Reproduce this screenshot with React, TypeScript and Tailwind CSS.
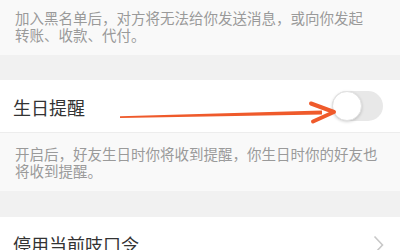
export default function App() {
  const font = { fontFamily: '"Noto Sans CJK SC", "Noto Sans", sans-serif' };
  return (
    <div
      className="relative h-[250px] w-[400px] overflow-hidden bg-[#f9f9f9]"
      style={font}
    >
      {/* 黑名单说明 */}
      <div className="bg-[#f9f9f9] px-[15px] pb-[12px] pt-[9px] text-[14.5px] leading-[17px] text-[#9a9a9a]">
        加入黑名单后，对方将无法给你发送消息，或向你发起
        <br />
        转账、收款、代付。
      </div>
      <div className="h-[25px] bg-[#f1f1f1]" />

      {/* 生日提醒 */}
      <div className="flex h-[53px] items-center justify-between border-b border-[#ededed] bg-white pl-[13px] pr-[17px]">
        <span className="pt-[2px] text-[18px] text-[#333]">生日提醒</span>
        <div className="relative h-[30px] w-[51px] rounded-full bg-[#e8e8e8]">
          <div className="absolute left-0 top-0 h-[30px] w-[30px] rounded-full border border-[#e2e2e2] bg-white shadow-[0_1px_3px_rgba(0,0,0,0.18)]" />
        </div>
      </div>

      <div className="bg-[#f9f9f9] px-[15px] pb-[12px] pt-[12px] text-[14.5px] leading-[17px] text-[#9a9a9a]">
        开启后，好友生日时你将收到提醒，你生日时你的好友也
        <br />
        将收到提醒。
      </div>
      <div className="h-[26px] bg-[#f1f1f1]" />

      {/* 停用当前吱口令 */}
      <div className="flex h-[53px] items-center justify-between bg-white pl-[13px] pr-[16px]">
        <span className="pt-[2px] text-[18px] text-[#333]">停用当前吱口令</span>
        <svg width="11" height="20" viewBox="0 0 11 20" className="mt-[2px]">
          <path d="M1.5 1.5 L9.5 10 L1.5 18.5" fill="none" stroke="#c8c8c8" strokeWidth="1.6" />
        </svg>
      </div>

      {/* 标注箭头 */}
      <svg
        className="pointer-events-none absolute left-0 top-0"
        width="400"
        height="250"
        viewBox="0 0 400 250"
      >
        <polygon points="120,116.3 120,118 322,114.5 322,110.5" fill="#ef5a2b" />
        <path
          d="M311 103.5 L334 112 L313 121.5"
          fill="none"
          stroke="#ef5a2b"
          strokeWidth="4"
          strokeLinecap="round"
          strokeLinejoin="round"
        />
      </svg>
    </div>
  );
}
